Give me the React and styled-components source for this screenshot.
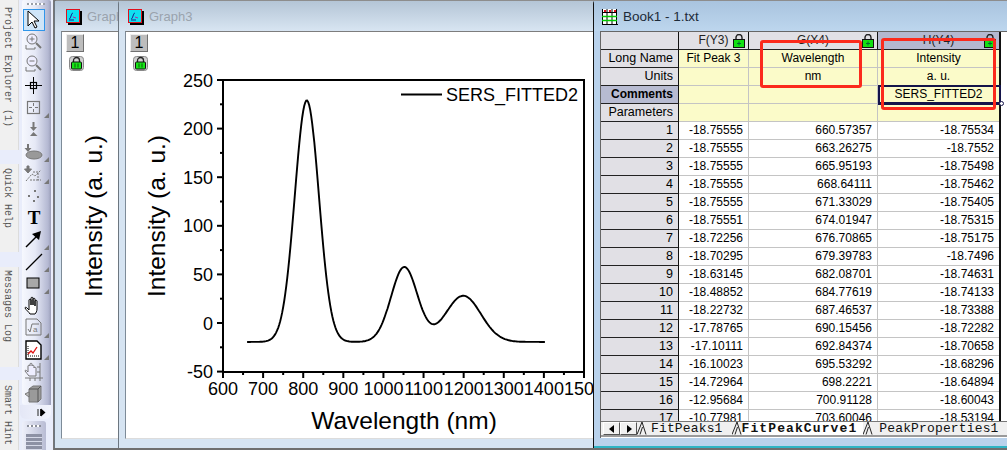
import React from 'react';
import styled, { createGlobalStyle } from 'styled-components';

const GlobalStyle = createGlobalStyle`
  html, body { margin: 0; padding: 0; background: #fff; overflow: hidden; }
  body { font-family: "Liberation Sans", Arial, sans-serif; }
`;

const Page = styled.div`
  width: 1007px;
  height: 450px;
  display: flex;
  overflow: hidden;
`;

/* left dock with the vertical tabs */
const Dock = styled.div`
  width: 22px;
  flex: none;
  background: #e9edfb;
  display: flex;
  flex-direction: column;
`;

const DockTab = styled.div`
  width: 19px;
  height: ${p => p.$height}px;
  margin-bottom: ${p => p.$gap || 0}px;
  background: #f0f0f0;
  border-right: 1px solid #dcdcdc;
  box-sizing: border-box;
  padding-top: ${p => p.$pad || 5}px;
  padding-right: 2px;
  font: 10px/17px "Liberation Mono", monospace;
  color: #555;
  writing-mode: vertical-rl;
  white-space: nowrap;
`;

/* vertical toolbar */
const ToolColumn = styled.div`
  width: 31px;
  flex: none;
  background: #e9edfb;
  display: flex;
  flex-direction: column;
  border-right: 1px solid #777;
`;

const ToolGroup = styled.div`
  height: 405px;
  width: 29px;
  box-sizing: border-box;
  background: linear-gradient(90deg, #f6f8fe 0%, #e6e9f6 45%, #b4b8d2 90%, #9a9eb8 100%);
  border-radius: 2px 2px 0 3px;
  padding: 3px 0 0 1px;
`;

const Grip = styled.div`
  width: 18px;
  height: 2px;
  margin: 0 0 4px 4px;
  background: repeating-linear-gradient(90deg, #9a9ea8 0 2px, #fff 2px 4px);
`;

const ToolButton = styled.div`
  width: 22px;
  height: 22px;
  box-sizing: border-box;
  position: relative;
  display: flex;
  align-items: center;
  justify-content: center;
  border: 1px solid ${p => (p.$active ? '#2f95ea' : 'transparent')};
  background: ${p => (p.$active ? '#cfe5f8' : 'transparent')};
  &::after {
    content: '';
    display: ${p => (p.$more ? 'block' : 'none')};
    position: absolute;
    right: -5px;
    bottom: 0;
    border-style: solid;
    border-width: 0 0 5px 5px;
    border-color: transparent transparent #777 transparent;
  }
`;

const Overflow = styled.div`
  height: 14px;
  width: 31px;
  margin-left: -2px;
  box-sizing: border-box;
  background: linear-gradient(90deg, #e4e7f6, #f3f5fd);
  border-radius: 0 0 6px 6px;
  display: flex;
  align-items: center;
  justify-content: flex-end;
  padding-right: 5px;
`;

const SecondGroup = styled.div`
  flex: 1;
  width: 24px;
  margin-top: 2px;
  box-sizing: border-box;
  background: linear-gradient(90deg, #eef0fa, #b8bcd4);
  border-radius: 3px 3px 0 0;
  padding: 4px 0 0 4px;
`;

const GripDots = styled.div`
  width: 14px;
  height: 2px;
  margin: 0 0 7px 1px;
  background: repeating-linear-gradient(90deg, #8a8e98 0 2px, #fff 2px 4px);
`;

const HandleBars = styled.div`
  width: 16px;
  height: 16px;
  background: repeating-linear-gradient(180deg, #8d91a4 0 3px, #d6d9e8 3px 4px);
`;

/* mdi area */
const Workspace = styled.div`
  flex: 1;
  position: relative;
  background: #6f6f6f;
`;

const Window = styled.div`
  position: absolute;
  top: 0;
  height: 448px;
  left: ${p => p.$left}px;
  width: ${p => p.$width}px;
  box-sizing: border-box;
  display: flex;
  flex-direction: column;
  border-top: 1px solid #8d8d8d;
  border-left: 1px solid ${p => (p.$active ? '#111' : '#6c7680')};
  background: ${p => (p.$active ? '#b9d2ec' : '#d6e4f2')};
  border-radius: 4px 0 0 0;
`;

const TitleBar = styled.div`
  height: 30px;
  flex: none;
  display: flex;
  align-items: center;
  box-sizing: border-box;
  gap: 5px;
  padding: 1px 0 0 ${p => p.$pad}px;
  font: ${p => (p.$active ? '13.5px' : '13px')} "Liberation Sans", sans-serif;
  color: ${p => (p.$active ? '#1d2a38' : '#9aa3ad')};
  background: ${p => (p.$active ? 'linear-gradient(180deg, #a9c4df, #bdd6ee)' : 'linear-gradient(180deg, #b4c5d6, #d8e5f2)')};
  overflow: hidden;
  white-space: nowrap;
`;

const GraphClient = styled.div`
  flex: 1;
  position: relative;
  margin: 0 0 9px 6px;
  background: #fff;
  border-top: 1px solid #7d7d7d;
  border-left: 1px solid #7d8b98;
  border-bottom: 1px solid #dcdcdc;
  overflow: hidden;
`;

const LayerButton = styled.div`
  position: absolute;
  top: 2px;
  left: 4px;
  width: 18px;
  height: 18px;
  box-sizing: border-box;
  background: #bdbdbd;
  border: 1px solid;
  border-color: #eee #707070 #707070 #eee;
  font: 16px/16px "Liberation Sans", sans-serif;
  text-align: center;
  color: #000;
`;

const LayerLock = styled.div`
  position: absolute;
  top: 24px;
  left: 7px;
  line-height: 0;
`;

const PlotSvg = styled.svg`
  display: block;
  font-family: "Liberation Sans", Arial, sans-serif;
  fill: #000;
`;

/* workbook */
const SheetClient = styled.div`
  flex: 1;
  margin: 0 0 10px 6px;
  background: #fff;
  border-top: 1px solid #666;
  border-left: 1px solid #666;
  display: flex;
  flex-direction: column;
  position: relative;
  overflow: hidden;
`;

const SheetGrid = styled.div`
  height: 389px;
  flex: none;
  overflow: hidden;
  position: relative;
`;

const Row = styled.div`
  display: grid;
  grid-template-columns: 78px 70px 129px 122px;
  height: 18px;
`;

const RowHead = styled.div`
  box-sizing: border-box;
  border-right: 1px solid #111;
  border-bottom: 1px solid #222;
  background: ${p => (p.$selected ? '#b7bbd1' : '#e1e0e5')};
  font: ${p => (p.$selected ? 'bold 12px' : '12.5px')}/17px "Liberation Sans", sans-serif;
  text-align: right;
  padding-right: 5px;
  color: #000;
`;

const ColHead = styled.div`
  box-sizing: border-box;
  position: relative;
  border-right: 1px solid #111;
  border-bottom: 1px solid #222;
  background: ${p => (p.$selected ? '#b4b8cf' : '#e1e0e5')};
  font: 12px/17px "Liberation Sans", sans-serif;
  text-align: center;
  color: #222;
`;

const HeadLock = styled.span`
  position: absolute;
  right: 3px;
  top: 2px;
  line-height: 0;
`;

const MetaCell = styled.div`
  box-sizing: border-box;
  background: #fbfbc9;
  border-right: 1px solid #c4c4c4;
  border-bottom: 1px solid #c4c4c4;
  font: 12px/17px "Liberation Sans", sans-serif;
  text-align: center;
  color: #000;
`;

const DataCell = styled.div`
  box-sizing: border-box;
  background: #fff;
  border-right: 1px solid #c4c4c4;
  border-bottom: 1px solid #c4c4c4;
  font: 12px/17px "Liberation Sans", sans-serif;
  text-align: right;
  padding-right: 5px;
  color: #000;
`;

const EndLine = styled.div`
  position: absolute;
  left: 398px;
  top: 0;
  bottom: 0;
  width: 2px;
  background: #111;
`;

const ActiveCell = styled.div`
  position: absolute;
  left: 277px;
  top: 53px;
  width: 123px;
  height: 20px;
  box-sizing: border-box;
  border: 2px solid #14144a;
  border-bottom-width: 3px;
  &::after {
    content: '';
    position: absolute;
    right: -5px;
    bottom: -4px;
    width: 3px;
    height: 3px;
    border: 1px solid #14144a;
    border-radius: 50%;
    background: #fff;
  }
`;

const Highlight = styled.div`
  position: absolute;
  box-sizing: border-box;
  left: ${p => p.$left}px;
  top: ${p => p.$top}px;
  width: ${p => p.$width}px;
  height: ${p => p.$height}px;
  border: 3px solid #fb2a1c;
  border-radius: 3px;
`;

const TabBar = styled.div`
  height: 16px;
  flex: none;
  display: flex;
  align-items: stretch;
  background: #f0f0f0;
  border-top: 1px solid #777;
  border-bottom: 2px solid #9a9a9a;
  box-sizing: border-box;
  padding-left: 2px;
`;

const NavButton = styled.div`
  width: 17px;
  box-sizing: border-box;
  border: 1px solid;
  border-color: #fff #555 #555 #fff;
  background: #f0f0f0;
  display: flex;
  align-items: center;
  justify-content: center;
`;

const SheetTab = styled.div`
  display: flex;
  align-items: center;
  padding: 0 ${p => p.$right}px 0 ${p => p.$left}px;
  background: ${p => (p.$active ? '#fff' : 'transparent')};
  font: ${p => (p.$active ? 'bold' : 'normal')} 13px "Liberation Mono", monospace;
  letter-spacing: ${p => (p.$active ? '1.1px' : '0.15px')};
  color: #111;
  white-space: nowrap;
`;

const BookEdge = styled.div`
  position: absolute;
  left: 0;
  right: 0;
  bottom: 0;
  height: 2px;
  background: #2fb4c4;
`;

/* drawings */
const PadLock = ({ size = 15 }) => (
  <svg width={size} height={size} viewBox="0 0 15 15">
    <rect x="0.5" y="0.5" width="14" height="14" rx="3" fill="#d0d0d0" stroke="#888" />
    <path d="M4.5 6V4.5a3 3 0 0 1 6 0V6" fill="none" stroke="#222" strokeWidth="1.3" />
    <rect x="2.5" y="6" width="10" height="7" rx="1" fill="#16e616" stroke="#111" />
    <path d="M6 7.5v4M9 7.5v4" stroke="#0a5a0a" />
  </svg>
);

const ColLock = () => (
  <svg width="12" height="14" viewBox="0 0 12 14">
    <path d="M3 6V3.5a3 3 0 0 1 6 0V6" fill="none" stroke="#222" strokeWidth="1.4" />
    <rect x="0.5" y="5.5" width="11" height="8" fill="#12e012" stroke="#111" />
    <path d="M6 7.5v4M4 9.5h4" stroke="#063" />
  </svg>
);

const GraphIcon = () => (
  <svg width="16" height="16" viewBox="0 0 16 16">
    <rect x="2" y="2" width="14" height="14" fill="#000" />
    <rect x="0.5" y="0.5" width="13" height="13" fill="#10e0f0" stroke="#e0101c" />
    <path d="M3 10c2 0 2-6 4-6M3 11h5" fill="none" stroke="#1a1a90" />
    <path d="M7 8l3 1" stroke="#c020a0" />
  </svg>
);

const BookIcon = () => (
  <svg width="16" height="16" viewBox="0 0 16 16">
    <rect x="0" y="0" width="15" height="15" fill="#fff" />
    <path d="M0.5 0v15M5 0v15M10 0v15M14.5 0v15M0 15.5h16M0 3.5h15" stroke="#000" />
    <path d="M0 7.5h15M0 11.5h15" stroke="#0c0" strokeWidth="1.4" />
    <path d="M2 1h2v2H2zM7 1h2v2H7zM12 1h2v2h-2z" fill="#e01020" />
  </svg>
);

const Gray = '#777';

const toolIcons = {
  pointer: <path d="M4 1v15l4-4 3 6 2-1-3-6h5z" fill="#fff" stroke="#000" />,
  zoomIn: (
    <g fill="none" stroke={Gray}>
      <circle cx="8" cy="7" r="5" fill="#eef" />
      <path d="M5.5 7h5M8 4.5v5" />
      <path d="M12 11l5 5" strokeWidth="2" />
      <path d="M2 13v4h9v-2" />
    </g>
  ),
  zoomOut: (
    <g fill="none" stroke={Gray}>
      <circle cx="8" cy="7" r="5" fill="#eef" />
      <path d="M5.5 7h5" />
      <path d="M12 11l5 5" strokeWidth="2" />
      <path d="M2 13v4h9v-2" />
    </g>
  ),
  cross: (
    <g fill="none" stroke="#000">
      <path d="M9.5 1v17M1 9.5h17" />
      <rect x="6.5" y="6.5" width="6" height="6" strokeWidth="1.2" />
    </g>
  ),
  region: (
    <g fill="none" stroke={Gray}>
      <rect x="3.5" y="3.5" width="12" height="12" strokeWidth="1.2" />
      <path d="M9.5 5v3M9.5 11v3M5 9.5h3M11 9.5h3" />
    </g>
  ),
  screen: (
    <g fill={Gray}>
      <path d="M8.5 2h2v5h2.500l-3.500 4L6 7h2.500z" />
      <path d="M9.500 12l4 4H6z" />
    </g>
  ),
  ellipse: (
    <g>
      <ellipse cx="10" cy="13" rx="8" ry="4" fill="#999" stroke={Gray} />
      <path d="M3 2h2v4h2.500L4 10 .5 6H3z" fill={Gray} />
    </g>
  ),
  draw: (
    <g fill="none" stroke={Gray}>
      <path d="M3 2h2v3h2.500L4 9 .5 5H3z" fill={Gray} />
      <path d="M2 17l6-7 3 2 6-6M9 8h5v8h3M6 16h8" strokeDasharray="2 1" />
    </g>
  ),
  dots: (
    <g fill={Gray}>
      <rect x="10" y="4" width="2" height="2" />
      <rect x="4" y="9" width="2" height="2" />
      <rect x="13" y="10" width="2" height="2" />
      <rect x="9" y="14" width="2" height="2" />
    </g>
  ),
  arrow: (
    <g stroke="#000" fill="#000">
      <path d="M2 17L14 5" strokeWidth="1.4" />
      <path d="M17 1l-2 9-7-6z" stroke="none" />
    </g>
  ),
  line: <path d="M2 18L18 2" stroke="#000" strokeWidth="1.3" />,
  rect: <rect x="3" y="4" width="12" height="10" fill="#a8a8a8" stroke="#000" strokeWidth="1" />,
  hand: (
    <path
      d="M6 18c-1-2-4-4-5-6 0-1 1-1 2 0l2 2V4c0-1 2-1 2 0v5V2c0-1 2-1 2 0v7V3c0-1 2-1 2 0v7V5c0-1 2-1 2 0v8c0 2-1 4-2 5z"
      fill="#fff"
      stroke="#000"
    />
  ),
  sqrt: (
    <g fill="none" stroke={Gray}>
      <path d="M2 1h11l4 4v12H2z" />
      <path d="M4 11l2 3 2-8h7" />
      <text x="9" y="14" fontSize="8" fill={Gray} stroke="none" fontFamily="Liberation Sans">a</text>
    </g>
  ),
  report: (
    <g>
      <path d="M2 1h11l4 4v14H2z" fill="#fff" stroke="#000" strokeWidth="1.4" />
      <path d="M4 14l3-3 2 2 4-6" fill="none" stroke="#e01010" strokeWidth="1.3" />
      <path d="M4 6v10h11" fill="none" stroke="#000" strokeDasharray="1 1" />
    </g>
  ),
  handAxis: (
    <g fill="none" stroke={Gray}>
      <path d="M5 14c-1-2-3-3-4-5 0-1 1-1 2 0l1 1V4c0-1 2-1 2 0V2c0-1 2-1 2 0v2c0-1 2-1 2 0v2c0-1 2-1 2 0v8z" fill="#eef" />
      <path d="M16 1v18M1 16h18M13 5h3M13 10h3M6 16v3M11 16v3" />
    </g>
  ),
  cube: (
    <g>
      <path d="M5 5l4-3h8v13l-3 3H5z" fill="#9a9a9a" stroke={Gray} />
      <path d="M5 5h9v13M14 5l3-3" fill="none" stroke="#555" />
      <path d="M5 8L1 10l4 3z" fill="#c0c0c0" stroke={Gray} />
    </g>
  ),
};

const ToolIcon = ({ name }) => (
  <svg width="20" height="20" viewBox="0 0 20 20">{toolIcons[name]}</svg>
);

const tools = [
  { name: 'pointer', active: true },
  { name: 'zoomIn' },
  { name: 'zoomOut' },
  { name: 'cross' },
  { name: 'region', more: true },
  { name: 'screen' },
  { name: 'ellipse', more: true },
  { name: 'draw', more: true },
  { name: 'dots' },
  { name: 'T' },
  { name: 'arrow', more: true },
  { name: 'line', more: true },
  { name: 'rect', more: true },
  { name: 'hand' },
  { name: 'sqrt', more: true },
  { name: 'report', more: true },
  { name: 'handAxis' },
  { name: 'cube' },
];

const TextTool = styled.span`
  font: bold 19px/20px "Liberation Serif", serif;
  color: #000;
`;

const TabEdge = () => (
  <svg width="10" height="13" viewBox="0 0 10 13">
    <path d="M0 12.500L5 0l4 12.500M3 12.500L5.500 5" fill="none" stroke="#222" />
  </svg>
);

/* plot: screen coordinates, x 600..1500 -> 222..583, y -50..250 -> 372..80 */
const px = w => 222 + (w - 600) * 0.4011;
const py = v => 323 - v * 0.972;
const gauss = (w, c, s, a) => a * Math.exp(-((w - c) ** 2) / (2 * s * s));

const curvePath = () => {
  const pts = [];
  for (let w = 660; w <= 1403; w += 2.5) {
    const v = -19.5 + gauss(w, 809, 30, 248.5) + gauss(w, 1052, 33, 77) + gauss(w, 1199, 44, 47.5);
    pts.push(`${px(w).toFixed(1)},${py(v).toFixed(1)}`);
  }
  return 'M' + pts.join('L');
};

const Plot = () => {
  const xs = [600, 700, 800, 900, 1000, 1100, 1200, 1300, 1400, 1500];
  const ys = [250, 200, 150, 100, 50, 0, -50];
  return (
    <PlotSvg width="480" height="406" viewBox="125 32 480 406">
      <rect x="222" y="80" width="361" height="292" fill="none" stroke="#000" strokeWidth="2" />
      {ys.map(v => (
        <g key={v}>
          <path d={`M216 ${py(v)}H222`} stroke="#000" strokeWidth="2" />
          {v > -50 && <path d={`M219 ${py(v - 25)}H222`} stroke="#000" strokeWidth="2" />}
          <text x="212" y={py(v) + 6.500} fontSize="18" textAnchor="end">{v}</text>
        </g>
      ))}
      {xs.map(w => (
        <g key={w}>
          <path d={`M${px(w)} 372v6`} stroke="#000" strokeWidth="2" />
          {w < 1500 && <path d={`M${px(w + 50)} 372v3`} stroke="#000" strokeWidth="2" />}
          <text x={px(w)} y="395" fontSize="18" textAnchor="middle">{w}</text>
        </g>
      ))}
      <path d={curvePath()} fill="none" stroke="#000" strokeWidth="1.9" />
      <path d="M400 94.500h41" stroke="#000" strokeWidth="2" />
      <text x="445" y="101" fontSize="18">SERS_FITTED2</text>
      <text x="403" y="429" fontSize="24.500" textAnchor="middle">Wavelength (nm)</text>
      <text transform="translate(163.500 216) rotate(-90)" fontSize="24.500" textAnchor="middle">Intensity (a. u.)</text>
    </PlotSvg>
  );
};

const SideLabel = () => (
  <PlotSvg width="60" height="406" viewBox="61 32 60 406">
    <text transform="translate(100.500 216) rotate(-90)" fontSize="24.500" textAnchor="middle">Intensity (a. u.)</text>
  </PlotSvg>
);

const rows = [
  ['-18.75555', '660.57357', '-18.75534'],
  ['-18.75555', '663.26275', '-18.7552'],
  ['-18.75555', '665.95193', '-18.75498'],
  ['-18.75555', '668.64111', '-18.75462'],
  ['-18.75555', '671.33029', '-18.75405'],
  ['-18.75551', '674.01947', '-18.75315'],
  ['-18.72256', '676.70865', '-18.75175'],
  ['-18.70295', '679.39783', '-18.7496'],
  ['-18.63145', '682.08701', '-18.74631'],
  ['-18.48852', '684.77619', '-18.74133'],
  ['-18.22732', '687.46537', '-18.73388'],
  ['-17.78765', '690.15456', '-18.72282'],
  ['-17.10111', '692.84374', '-18.70658'],
  ['-16.10023', '695.53292', '-18.68296'],
  ['-14.72964', '698.2221', '-18.64894'],
  ['-12.95684', '700.91128', '-18.60043'],
  ['-10.77981', '703.60046', '-18.53194'],
];

const meta = [
  ['Long Name', 'Fit Peak 3', 'Wavelength', 'Intensity'],
  ['Units', '', 'nm', 'a. u.'],
  ['Comments', '', '', 'SERS_FITTED2'],
  ['Parameters', '', '', ''],
];

const App = () => (
  <Page>
    <GlobalStyle />
    <Dock>
      <DockTab $height={150} $gap={14} $pad={7}>Project Explorer (1)</DockTab>
      <DockTab $height={88} $gap={15} $pad={4}>Quick Help</DockTab>
      <DockTab $height={100} $gap={13} $pad={3}>Messages Log</DockTab>
      <DockTab $height={70} $pad={5}>Smart Hint</DockTab>
    </Dock>
    <ToolColumn>
      <ToolGroup>
        <Grip />
        {tools.map(t => (
          <ToolButton key={t.name} $active={t.active} $more={t.more}>
            {t.name === 'T' ? <TextTool>T</TextTool> : <ToolIcon name={t.name} />}
          </ToolButton>
        ))}
      </ToolGroup>
      <Overflow>
        <svg width="9" height="9" viewBox="0 0 9 9">
          <path d="M1 1v7M3.500 1v7" stroke="#222" />
          <path d="M4 0.500l4.500 4-4.500 4z" fill="#000" />
        </svg>
      </Overflow>
      <SecondGroup>
        <GripDots />
        <HandleBars />
      </SecondGroup>
    </ToolColumn>
    <Workspace>
      <Window $left={0} $width={90}>
        <TitleBar $pad={11}>
          <GraphIcon />
          Graph2
        </TitleBar>
        <GraphClient>
          <SideLabel />
          <LayerButton>1</LayerButton>
          <LayerLock><PadLock /></LayerLock>
        </GraphClient>
      </Window>
      <Window $left={64} $width={500}>
        <TitleBar $pad={9}>
          <GraphIcon />
          Graph3
        </TitleBar>
        <GraphClient>
          <Plot />
          <LayerButton>1</LayerButton>
          <LayerLock><PadLock /></LayerLock>
        </GraphClient>
      </Window>
      <Window $active $left={539} $width={415}>
        <TitleBar $active $pad={8}>
          <BookIcon />
          Book1 - 1.txt
        </TitleBar>
        <SheetClient>
          <SheetGrid>
            <Row>
              <RowHead />
              <ColHead>F(Y3)<HeadLock><ColLock /></HeadLock></ColHead>
              <ColHead>G(X4)<HeadLock><ColLock /></HeadLock></ColHead>
              <ColHead $selected>H(Y4)<HeadLock><ColLock /></HeadLock></ColHead>
            </Row>
            {meta.map(m => (
              <Row key={m[0]}>
                <RowHead $selected={m[0] === 'Comments'}>{m[0]}</RowHead>
                <MetaCell>{m[1]}</MetaCell>
                <MetaCell>{m[2]}</MetaCell>
                <MetaCell>{m[3]}</MetaCell>
              </Row>
            ))}
            {rows.map((r, i) => (
              <Row key={i}>
                <RowHead>{i + 1}</RowHead>
                <DataCell>{r[0]}</DataCell>
                <DataCell>{r[1]}</DataCell>
                <DataCell>{r[2]}</DataCell>
              </Row>
            ))}
            <EndLine />
            <ActiveCell />
            <Highlight $left={159} $top={8} $width={102} $height={48} />
            <Highlight $left={280} $top={6} $width={115} $height={72} />
          </SheetGrid>
          <TabBar>
            <NavButton>
              <svg width="6" height="8" viewBox="0 0 6 8"><path d="M5 0v8L0 4z" fill="#000" /></svg>
            </NavButton>
            <NavButton>
              <svg width="6" height="8" viewBox="0 0 6 8"><path d="M1 0v8l5-4z" fill="#000" /></svg>
            </NavButton>
            <TabEdge />
            <SheetTab $left={4} $right={9}>FitPeaks1</SheetTab>
            <TabEdge />
            <SheetTab $active $left={0} $right={6}>FitPeakCurve1</SheetTab>
            <TabEdge />
            <SheetTab $left={6} $right={4}>PeakProperties1</SheetTab>
          </TabBar>
        </SheetClient>
        <BookEdge />
      </Window>
    </Workspace>
  </Page>
);

export default App;
